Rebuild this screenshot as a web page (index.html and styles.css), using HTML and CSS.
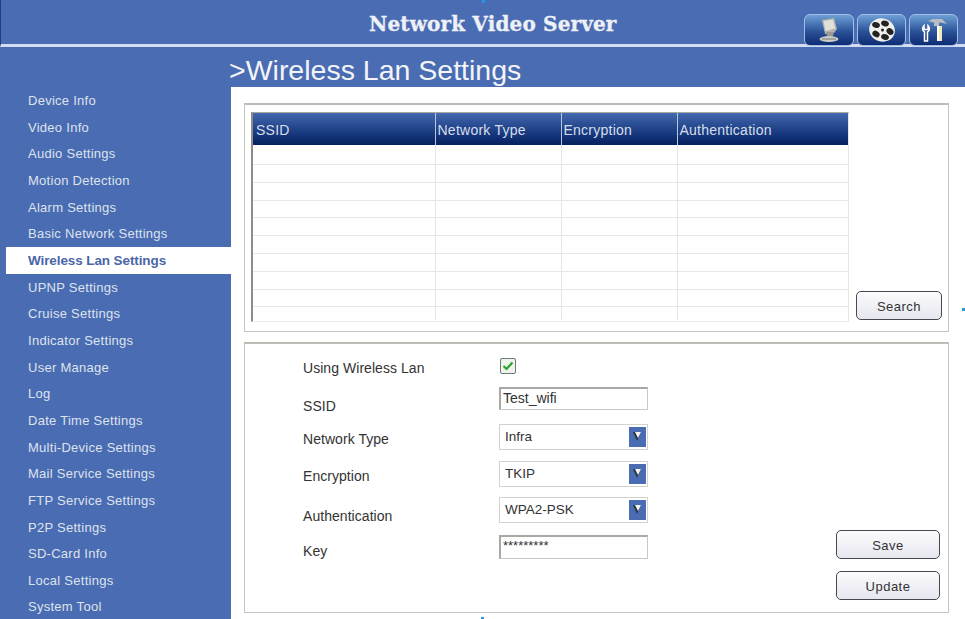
FILE: index.html
```
<!DOCTYPE html>
<html lang="en">
<head>
<meta charset="utf-8">
<title>Network Video Server</title>
<link rel="stylesheet" href="styles.css">
</head>
<body>
<div class="page">
  <header class="topbar">
    <div class="brand">Network Video Server</div>
    <nav class="tabs">
      <button class="tab"><svg width="26" height="26" viewBox="0 0 26 26"><path d="M6 3l12-2 3 11-3 4-9 1z" fill="#b4b4ae"/><path d="M7.500 4l9.500-1.500 2.200 9-9.700 2.500z" fill="#e0e0da"/><path d="M10 15h8l-1 4h-6z" fill="#9a9a92"/><ellipse cx="13" cy="22" rx="9.500" ry="3" fill="#cdcdc6"/><path d="M6 22h14" stroke="#7d7d76" stroke-width="1"/></svg></button>
      <button class="tab"><svg width="30" height="26" viewBox="0 0 30 26"><ellipse cx="15" cy="13" rx="13" ry="11.500" transform="rotate(18 15 13)" fill="#eeeeea"/><ellipse cx="9" cy="8" rx="4" ry="2.800" transform="rotate(20 9 8)" fill="#222"/><ellipse cx="18" cy="6.500" rx="4" ry="2.800" transform="rotate(20 18 6.500)" fill="#222"/><ellipse cx="23" cy="14.500" rx="3.800" ry="3" transform="rotate(40 23 14.500)" fill="#222"/><ellipse cx="18" cy="20" rx="4" ry="2.800" transform="rotate(20 18 20)" fill="#222"/><ellipse cx="9" cy="17" rx="3.800" ry="3" transform="rotate(30 9 17)" fill="#222"/><circle cx="15.500" cy="13" r="1.500" fill="#222"/></svg></button>
      <button class="tab"><svg width="30" height="28" viewBox="0 0 30 28"><path d="M9 5l5-2h9l5 5-6-1.500h-2V10h-5V6.500z" fill="#b9bcc4"/><path d="M18 10h5v15h-5z" fill="#f0e6b8"/><path d="M18 10h2v15h-2z" fill="#fff"/><path d="M5 9.500c-2 2-2 5 .5 6.500v9h3v-9c2.500-1.500 2.500-4.500.5-6.500v4H5z" fill="none" stroke="#fff" stroke-width="1.500"/></svg></button>
    </nav>
  </header>
  <div class="body-row">
    <aside class="sidebar">
      <ul class="menu">
        <li class="menu-item">Device Info</li>
        <li class="menu-item">Video Info</li>
        <li class="menu-item">Audio Settings</li>
        <li class="menu-item">Motion Detection</li>
        <li class="menu-item">Alarm Settings</li>
        <li class="menu-item">Basic Network Settings</li>
        <li class="menu-item active">Wireless Lan Settings</li>
        <li class="menu-item">UPNP Settings</li>
        <li class="menu-item">Cruise Settings</li>
        <li class="menu-item">Indicator Settings</li>
        <li class="menu-item">User Manage</li>
        <li class="menu-item">Log</li>
        <li class="menu-item">Date Time Settings</li>
        <li class="menu-item">Multi-Device Settings</li>
        <li class="menu-item">Mail Service Settings</li>
        <li class="menu-item">FTP Service Settings</li>
        <li class="menu-item">P2P Settings</li>
        <li class="menu-item">SD-Card Info</li>
        <li class="menu-item">Local Settings</li>
        <li class="menu-item">System Tool</li>
      </ul>
    </aside>
    <main class="content">
      <h1 class="title">&gt;Wireless Lan Settings</h1>
      <div class="panels">
        <section class="panel scan">
          <div class="grid-wrap">
            <table class="ap-table">
              <colgroup><col class="c1"><col class="c2"><col class="c3"><col class="c4"></colgroup>
              <thead><tr><th>SSID</th><th>Network Type</th><th>Encryption</th><th>Authentication</th></tr></thead>
              <tbody>
                <tr class="r19"><td></td><td></td><td></td><td></td></tr>
                <tr><td></td><td></td><td></td><td></td></tr>
                <tr><td></td><td></td><td></td><td></td></tr>
                <tr><td></td><td></td><td></td><td></td></tr>
                <tr><td></td><td></td><td></td><td></td></tr>
                <tr><td></td><td></td><td></td><td></td></tr>
                <tr><td></td><td></td><td></td><td></td></tr>
                <tr><td></td><td></td><td></td><td></td></tr>
                <tr><td></td><td></td><td></td><td></td></tr>
                <tr class="r13"><td></td><td></td><td></td><td></td></tr>
              </tbody>
            </table>
          </div>
          <button class="btn search">Search</button>
        </section>
        <section class="panel settings">
          <form class="form">
            <div class="row h-check"><span class="label nudge-check">Using Wireless Lan</span><span class="check"><svg width="12" height="10" viewBox="0 0 12 10"><path d="M1.500 5l3 3 6-6.500" fill="none" stroke="#2aa52a" stroke-width="2.200"/></svg></span></div>
            <div class="row h-ssid"><span class="label nudge-ssid">SSID</span><span class="input">Test_wifi</span></div>
            <div class="row h-net"><span class="label nudge-sel">Network Type</span><span class="select">Infra<i class="arrow"></i></span></div>
            <div class="row h-enc"><span class="label nudge-sel">Encryption</span><span class="select">TKIP<i class="arrow"></i></span></div>
            <div class="row h-auth"><span class="label nudge-auth">Authentication</span><span class="select">WPA2-PSK<i class="arrow"></i></span></div>
            <div class="row h-key"><span class="label nudge-key">Key</span><span class="input key">*********</span></div>
          </form>
          <div class="actions">
            <button class="btn action">Save</button>
            <button class="btn action">Update</button>
          </div>
        </section>
      </div>
    </main>
  </div>
  <span class="handle h-top"></span>
  <span class="handle h-right"></span>
  <span class="handle h-bottom"></span>
</div>
</body>
</html>
```
FILE: styles.css
```
* { box-sizing: border-box; }
html, body { margin: 0; padding: 0; }
body { font-family: "Liberation Sans", Arial, sans-serif; background: #4a6cb2; }
.page { position: relative; width: 965px; height: 619px; overflow: hidden; background: #4a6cb2; display: flex; flex-direction: column; }

.topbar { height: 47px; flex: none; display: flex; justify-content: flex-end; align-items: flex-start; position: relative; border-bottom: 3px solid #d6dcef; border-left: 1px solid #24407c; padding: 14px 7px 0 0; }
.brand { position: absolute; left: 368px; top: 11px; font-family: "DejaVu Serif", serif; font-weight: 700; font-size: 20px; line-height: 26px; color: #eef1f7; letter-spacing: 0.15px; white-space: nowrap; -webkit-text-stroke: 0.3px #eef1f7; }
.tabs { display: flex; gap: 3px; position: relative; z-index: 1; }
.tab { width: 50px; height: 32px; padding: 0; border: 1px solid #9dbfe6; border-radius: 6px; background: linear-gradient(#6ea0d6, #2a5299 55%, #0f2c72); display: flex; align-items: center; justify-content: center; overflow: hidden; }
.tab + .tab { width: 49px; }

.body-row { flex: 1; display: flex; min-height: 0; }
.sidebar { width: 231px; flex: none; padding: 40px 0 0 6px; }
.menu { list-style: none; margin: 0; padding: 0; }
.menu-item { height: 26.670px; line-height: 28px; padding-left: 22px; font-size: 13px; color: #dde3ee; white-space: nowrap; letter-spacing: 0.27px; }
.menu-item.active { background: #fff; color: #4a66a8; font-weight: 700; font-size: 13.500px; letter-spacing: -0.1px; }

.content { flex: 1; min-width: 0; display: flex; flex-direction: column; }
.title { margin: 0 0 0 -2px; height: 40px; flex: none; font-weight: 400; font-size: 28.500px; line-height: 46px; color: #f2f4f8; white-space: nowrap; }
.panels { flex: 1; background: #fff; padding: 16px 16px 6px 13px; display: flex; flex-direction: column; gap: 10px; }
.panel { border: 1px solid #c6c6bf; border-top: 2px solid #bdbdb6; display: flex; }
.scan { height: 229px; padding: 7px 6px 0 6px; justify-content: space-between; }
.grid-wrap { width: 598px; height: 210px; border-left: 2px solid #8c8c88; border-top: 1px solid #a9a9a4; border-right: 1px solid #e8e8e0; border-bottom: 1px solid #eeeee6; }
.ap-table { width: 100%; border-collapse: collapse; table-layout: fixed; }
.c1 { width: 182px; } .c2 { width: 126px; } .c3 { width: 116px; }
.ap-table th { height: 32px; padding: 2px 0 0 2px; text-align: left; font-weight: 400; font-size: 14px; color: #d7deea; letter-spacing: 0.25px; background: linear-gradient(#4468ad, #1c3f86 55%, #05215f); border-left: 1px solid #b8c6de; }
.ap-table th:first-child { border-left: 0; padding-left: 3px; }
.ap-table td { height: 17.800px; padding: 0; border-left: 1px solid #e6e6df; border-bottom: 1px solid #e8e8e2; }
.ap-table td:first-child { border-left: 0; }
.ap-table .r19 td { height: 19.500px; }
.ap-table .r13 td { height: 13px; border-bottom: 0; }

.btn { font-family: "Liberation Sans", Arial, sans-serif; font-size: 13px; color: #333; padding: 1px 0 0; border: 1px solid #45494f; border-radius: 5px; background: linear-gradient(#fbfbfd, #e6e7ef); letter-spacing: 0.5px; }
.search { width: 86px; height: 29px; margin-top: 179px; }

.settings { flex: 1; padding: 0; justify-content: space-between; min-height: 0; }
.form { margin-left: 58px; padding-top: 7px; width: 410px; display: flex; flex-direction: column; }
.row { display: flex; align-items: center; }
.label { width: 196px; flex: none; font-size: 14px; color: #333; letter-spacing: 0.05px; }
.nudge-check { padding-top: 4px; }
.nudge-ssid { padding-top: 16px; }
.nudge-sel { padding-top: 6px; }
.nudge-auth { padding-top: 14px; }
.nudge-key { padding-top: 8px; }
.h-check { height: 29px; }
.h-ssid { height: 36px; }
.h-net { height: 40px; }
.h-enc { height: 34px; }
.h-auth { height: 38px; }
.h-key { height: 38px; }
.check { width: 16px; height: 16px; margin-left: 1px; border: 1px solid #6d7c76; border-radius: 2px; background: #eef3ee; display: flex; align-items: center; justify-content: center; }
.input { width: 149px; height: 23px; border: 1px solid #c9c9c4; border-top: 2px solid #a8a8a4; border-left: 2px solid #a8a8a4; padding-left: 2px; font-size: 14px; line-height: 19px; color: #333; }
.input.key { height: 24px; font-size: 13px; line-height: 17px; }
.select { width: 149px; height: 26px; margin-top: 1px; border: 1px solid #d3d3ce; padding-left: 5px; font-size: 13.500px; line-height: 24px; color: #333; display: flex; justify-content: space-between; }
.arrow { width: 17px; height: 20px; margin: 2px 1px 0 0; background: #4a6cb2; position: relative; }
.arrow::before { content: ""; position: absolute; left: 4px; top: 5px; border-left: 4.500px solid transparent; border-right: 4.500px solid transparent; border-top: 9px solid #2c3442; }
.arrow::after { content: ""; position: absolute; left: 5.500px; top: 5.500px; border-left: 3px solid transparent; border-right: 3px solid transparent; border-top: 6.500px solid #f4f4f4; }
.actions { display: flex; flex-direction: column; gap: 12px; padding: 186px 8px 0 0; }
.action { width: 104px; height: 29px; }

.handle { position: absolute; width: 3px; height: 3px; background: #1e9be8; }
.h-top { left: 482px; top: 0; }
.h-right { left: 962px; top: 308px; }
.h-bottom { left: 481px; top: 617px; }
```
